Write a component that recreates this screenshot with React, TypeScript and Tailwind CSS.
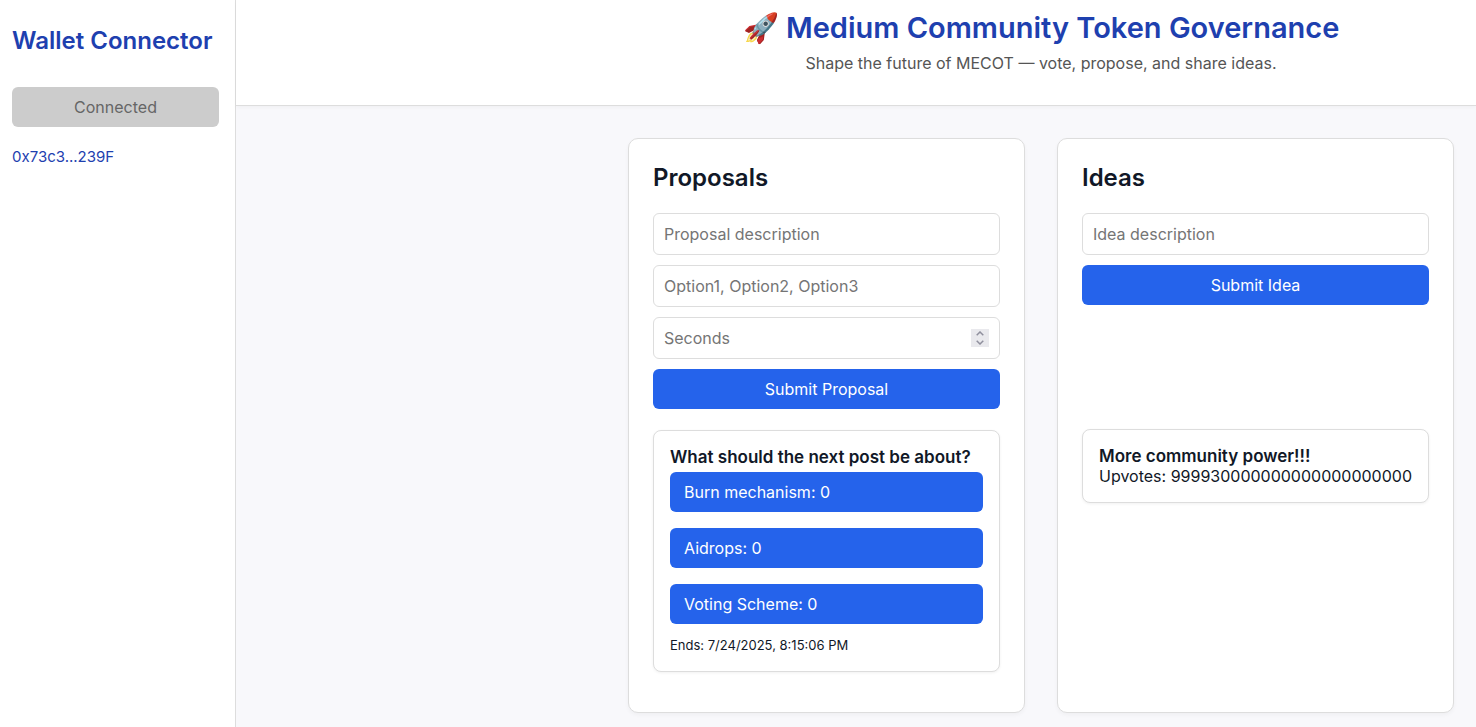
import type { InputHTMLAttributes, ReactNode } from "react";

const options = ["Burn mechanism", "Aidrops", "Voting Scheme"];

const panel =
  "flex w-[397px] flex-col rounded-[10px] border border-[#dddddd] bg-white px-6 pt-6 pb-10 shadow-[0_2px_4px_rgba(0,0,0,0.04)]";
const field =
  "h-[42px] w-full rounded-md border border-[#dddddd] bg-white px-2.5 text-base text-[#111827] placeholder:text-[#757575]";
const action = "h-10 w-full rounded-md bg-[#2563eb] text-base text-white";
const card =
  "rounded-lg border border-[#dddddd] bg-white p-4 text-base leading-5 shadow-[0_1px_3px_rgba(0,0,0,0.06)]";

function TextField({ label, ...rest }: { label: string } & InputHTMLAttributes<HTMLInputElement>) {
  return <input aria-label={label} placeholder={label} className={field} {...rest} />;
}

function SecondsField() {
  return (
    <div className="flex h-[42px] w-full items-center rounded-md border border-[#dddddd] bg-white px-2.5">
      <input
        type="number"
        aria-label="Seconds"
        placeholder="Seconds"
        className="min-w-0 flex-1 bg-transparent text-base [appearance:textfield] outline-none placeholder:text-[#757575] [&::-webkit-inner-spin-button]:appearance-none"
      />
      <span className="flex size-[18px] flex-col bg-[#e9e9ed] text-[#8f8f9d]">
        <button type="button" aria-label="Increase" className="flex h-[9px] items-center justify-center">
          <svg width="8" height="5" viewBox="0 0 8 5" fill="none" stroke="currentColor" strokeWidth="1.5">
            <path d="M0.7 4.2 4 1l3.3 3.2" />
          </svg>
        </button>
        <button type="button" aria-label="Decrease" className="flex h-[9px] items-center justify-center">
          <svg width="8" height="5" viewBox="0 0 8 5" fill="none" stroke="currentColor" strokeWidth="1.5">
            <path d="M0.7 0.8 4 4l3.3-3.2" />
          </svg>
        </button>
      </span>
    </div>
  );
}

function Panel({ title, children }: { title: string; children: ReactNode }) {
  return (
    <section className={panel}>
      <h2 className="mb-5 text-2xl leading-[30px] font-semibold">{title}</h2>
      {children}
    </section>
  );
}

export default function App() {
  return (
    <div className="flex min-h-screen bg-[#f8f8fb] font-['Inter',sans-serif] text-[#111827]">
      <aside className="w-[236px] shrink-0 border-r border-[#dddddd] bg-white pt-[26px] pr-4 pl-3">
        <h2 className="text-2xl leading-[30px] font-semibold whitespace-nowrap text-[#1e40af]">Wallet Connector</h2>
        <button disabled className="mt-[31px] h-10 w-full rounded-md bg-[#cccccc] text-base text-[#666666]">
          Connected
        </button>
        <p className="mt-5 text-[15px] leading-5 text-[#1e40af]">0x73c3...239F</p>
      </aside>
      <div className="min-w-0 flex-1">
        <header className="flex h-[106px] justify-end border-b border-[#dddddd] bg-white pt-2 pr-[22px] shadow-[0_2px_4px_rgba(0,0,0,0.03)]">
          <div className="w-[826px] text-center">
            <h1 className="text-[29px] leading-10 font-semibold whitespace-nowrap text-[#1e40af]">
              🚀 Medium Community Token Governance
            </h1>
            <p className="mt-[5px] text-base leading-5 text-[#555555]">
              Shape the future of MECOT — vote, propose, and share ideas.
            </p>
          </div>
        </header>
        <main className="flex justify-end gap-8 pt-8 pr-[22px] pb-3.5">
          <Panel title="Proposals">
            <form className="flex flex-col gap-2.5" onSubmit={(e) => e.preventDefault()}>
              <TextField label="Proposal description" />
              <TextField label="Option1, Option2, Option3" />
              <SecondsField />
              <button className={action}>Submit Proposal</button>
            </form>
            <article className={`mt-[21px] ${card}`}>
              <h3 className="text-[17px] leading-5 font-semibold">What should the next post be about?</h3>
              <div className="mt-[5px] flex flex-col gap-4">
                {options.map((name) => (
                  <button key={name} className="h-10 w-full rounded-md bg-[#2563eb] px-3.5 text-left text-base text-white">
                    {name}: 0
                  </button>
                ))}
              </div>
              <p className="mt-3 text-[13px] leading-[19px]">Ends: 7/24/2025, 8:15:06 PM</p>
            </article>
          </Panel>
          <Panel title="Ideas">
            <form className="flex flex-col gap-2.5" onSubmit={(e) => e.preventDefault()}>
              <TextField label="Idea description" />
              <button className={action}>Submit Idea</button>
            </form>
            <article className={`mt-[124px] ${card}`}>
              <h3 className="text-[17px] leading-5 font-semibold">More community power!!!</h3>
              <p>Upvotes: 999930000000000000000000</p>
            </article>
          </Panel>
        </main>
      </div>
    </div>
  );
}
